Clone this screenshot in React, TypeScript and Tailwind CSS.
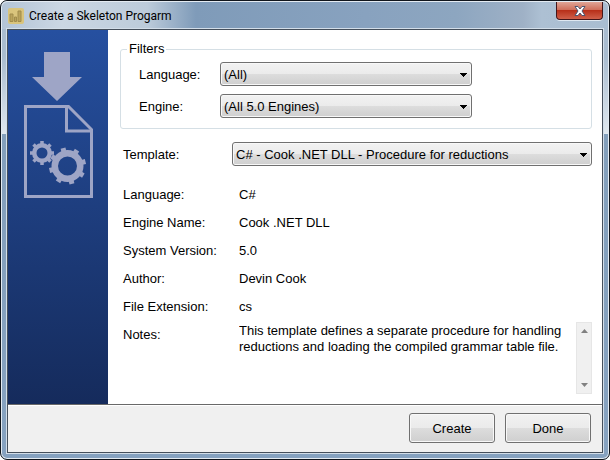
import React, { useState } from "react";

const details = [
  ["Language:", "C#"],
  ["Engine Name:", "Cook .NET DLL"],
  ["System Version:", "5.0"],
  ["Author:", "Devin Cook"],
  ["File Extension:", "cs"],
];

function SelectBox({ id, options, className }: { id: string; options: string[]; className: string }) {
  const [value, setValue] = useState(options[0]);
  return (
    <div className={`relative h-6 ${className}`}>
      <select
        id={id}
        value={value}
        onChange={(e) => setValue(e.target.value)}
        className="block h-6 w-full appearance-none rounded-[3px] border border-[#707070] bg-[linear-gradient(180deg,#f2f2f2_0%,#ebebeb_50%,#dddddd_50%,#cfcfcf_100%)] pt-[2px] pr-6 pl-[3px] leading-4 shadow-[inset_0_0_0_1px_#f8f8f8]"
      >
        {options.map((o) => (
          <option key={o}>{o}</option>
        ))}
      </select>
      <svg viewBox="0 0 7 4" className="pointer-events-none absolute top-[11px] right-[5px] h-1 w-[7px]" shapeRendering="crispEdges" aria-hidden="true">
        <path d="M0 0h7v1h-1v1h-1v1h-1v1h-1v-1h-1v-1h-1v-1h-1z" />
      </svg>
    </div>
  );
}

type GearProps = { cx: number; cy: number; r: number; hole: number; teeth: number; tooth: number; reach: number; turn: number };

function Gear({ cx, cy, r, hole, teeth, tooth, reach, turn }: GearProps) {
  return (
    <g transform={`translate(${cx} ${cy})`}>
      <circle r={(r + hole) / 2} fill="none" stroke="#9ea5c6" strokeWidth={r - hole} />
      {Array.from({ length: teeth }, (_, i) => (
        <rect
          key={i}
          x={-tooth / 2}
          y={-reach}
          width={tooth}
          height={reach - r + 1}
          fill="#9ea5c6"
          transform={`rotate(${turn + (i * 360) / teeth})`}
        />
      ))}
    </g>
  );
}

function ProgramDrawing() {
  return (
    <svg viewBox="0 0 69 146" className="h-[146px] w-[69px]" aria-hidden="true">
      <path d="M20 0h26v25h12L33 49 8 25h12z" fill="#9ea5c6" />
      <path d="M1.500 54.500h43L67.500 77.500v67H1.500z" fill="none" stroke="#9ea5c6" strokeWidth="3" />
      <path d="M42.500 54.500v24.500h25" fill="none" stroke="#9ea5c6" strokeWidth="3" />
      <Gear cx={18} cy={101} r={10} hole={5.5} teeth={8} tooth={3.5} reach={12} turn={0} />
      <Gear cx={43.5} cy={114} r={16} hole={9.5} teeth={8} tooth={5} reach={18.5} turn={-14} />
    </svg>
  );
}

const pushButton =
  "h-[30px] w-[86px] rounded-[3px] border border-[#707070] bg-[linear-gradient(180deg,#f2f2f2_0%,#ebebeb_50%,#dddddd_50%,#cfcfcf_100%)] pt-[2px] shadow-[inset_0_0_0_1px_#f8f8f8]";

export default function App() {
  return (
    <div className="flex min-h-screen flex-col rounded-[7px] border border-[#10151c] bg-[linear-gradient(180deg,#a9bccf_0%,#a9bccf_12%,#dfe7ee_29%,#839fbb_29%,#86a2c0_100%)] p-px font-['Liberation_Sans',Arial,sans-serif] text-[13px] leading-4 text-black shadow-[inset_0_0_0_1px_#e4ebf2]">
      <header className="-mt-px flex h-7 items-start justify-between rounded-t-[6px] border-t border-[#e4ebf2] bg-[linear-gradient(90deg,#b3c4d6_0%,#cbd7e3_10%,#bccbda_24%,#7f9bb9_32%,#88a2bf_60%,#8da6c0_75%,#9fb1c6_86%,#adc0d3_89%,#a9bdd1_100%)] px-[5px]">
        <div className="flex h-[27px] items-center gap-[5px] pl-px">
          <svg viewBox="0 0 16 16" className="size-4" aria-hidden="true">
            <rect width="16" height="16" rx="2" fill="#d9c47c" />
            <path d="M2 13.500V6h3v7.500zM6.500 13.500V9h2v4.500zM10 13.500V3h3v10.500z" fill="#b9a35c" stroke="#a08c4c" />
          </svg>
          <h1 className="font-[Roboto,sans-serif] text-[12px]">Create a Skeleton Progarm</h1>
        </div>
        <button aria-label="Close" className="flex h-[18px] w-[47px] items-center justify-center rounded-b-[4px] border border-t-0 border-[#43161a] bg-[linear-gradient(180deg,#e0a596_0%,#d0705c_45%,#b8301a_50%,#d0604a_100%)] shadow-[0_1px_0_#dfe8f1]">
          <svg viewBox="0 0 12 10" className="h-[10px] w-3" aria-hidden="true">
            <path d="M1 .5h3L6 3 8 .5h3L8 5l3 4.500H8L6 7 4 9.500H1L4 5z" fill="#fff" stroke="#4d5570" />
          </svg>
        </button>
      </header>
      <div className="mx-[5px] mb-[5px] flex flex-1 flex-col border border-[#454f5b] bg-white shadow-[0_0_0_1px_#d3dee9]">
        <div className="flex flex-1">
          <aside className="w-[100px] shrink-0 bg-linear-to-b from-[#2650a0] to-[#152b5c] pt-[22px] pl-4">
            <ProgramDrawing />
          </aside>
          <main className="min-w-0 flex-1 pt-[11px] pr-[10px] pl-3">
            <fieldset className="rounded-[3px] border border-[#d5dfe5] pb-[10px] pl-[18px]">
              <legend className="-ml-3 px-[2px]">Filters</legend>
              <div className="flex flex-col gap-2 pt-[5px]">
                <div className="flex items-center">
                  <label htmlFor="language" className="w-[81px] pt-[2px]">Language:</label>
                  <SelectBox id="language" options={["(All)", "C#"]} className="w-[252px]" />
                </div>
                <div className="flex items-center">
                  <label htmlFor="engine" className="w-[81px] pt-[2px]">Engine:</label>
                  <SelectBox id="engine" options={["(All 5.0 Engines)", "Cook .NET DLL"]} className="w-[252px]" />
                </div>
              </div>
            </fieldset>
            <div className="mt-[13px] flex items-center pl-[3px]">
              <label htmlFor="template" className="w-[109px] pt-[2px]">Template:</label>
              <SelectBox id="template" options={["C# - Cook .NET DLL - Procedure for reductions"]} className="flex-1" />
            </div>
            <dl className="mt-[21px] flex flex-col gap-3 pl-[3px]">
              {details.map(([name, value]) => (
                <div key={name} className="flex">
                  <dt className="w-[116px]">{name}</dt>
                  <dd>{value}</dd>
                </div>
              ))}
            </dl>
            <div className="mt-[7px] flex pl-[3px]">
              <label htmlFor="notes" className="w-[116px] pt-[5px]">Notes:</label>
              <textarea
                id="notes"
                readOnly
                className="h-[72px] min-w-0 flex-1 resize-none overflow-hidden pt-px"
                defaultValue={"This template defines a separate procedure for handling reductions and loading the compiled grammar table file."}
              />
              <div className="flex h-[72px] w-4 flex-col justify-between border border-[#e6e6e6] bg-[#f0f0f0]">
                <button aria-label="Scroll up" className="flex h-4 items-center justify-center">
                  <svg viewBox="0 0 7 4" className="h-1 w-[7px]" aria-hidden="true"><path d="M0 4 3.500 0 7 4z" fill="#808080" /></svg>
                </button>
                <button aria-label="Scroll down" className="flex h-4 items-center justify-center">
                  <svg viewBox="0 0 7 4" className="h-1 w-[7px]" aria-hidden="true"><path d="M0 0 3.500 4 7 0z" fill="#808080" /></svg>
                </button>
              </div>
            </div>
          </main>
        </div>
        <footer className="flex justify-end gap-[10px] border-t border-[#696969] bg-[#f0f0f0] pt-2 pr-[11px] pb-[9px] shadow-[inset_0_1px_0_#ffffff]">
          <button className={pushButton}>Create</button>
          <button className={pushButton}>Done</button>
        </footer>
      </div>
    </div>
  );
}
